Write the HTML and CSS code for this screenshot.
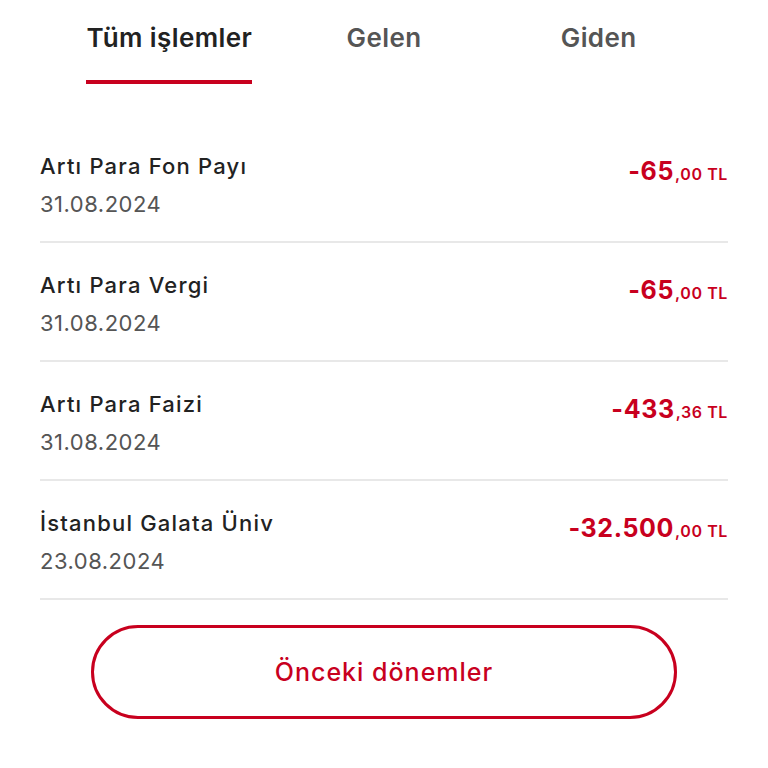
FILE: index.html
```html
<!DOCTYPE html>
<html lang="tr">
	<head>
		<meta charset="UTF-8" />
		<meta name="viewport" content="width=device-width, initial-scale=1.0" />
		<title>Hesap hareketleri</title>
		<link rel="stylesheet" href="styles.css">
	</head>
	<body>
		<div class="container">
			<div class="tabs">
				<div class="tab"><span class="tab-label active">Tüm işlemler</span></div>
				<div class="tab"><span class="tab-label">Gelen</span></div>
				<div class="tab"><span class="tab-label">Giden</span></div>
			</div>

			<div class="list">
				<div class="row">
					<div class="info">
						<p class="title">Artı Para Fon Payı</p>
						<p class="date">31.08.2024</p>
					</div>
					<p class="amount">-65<small>,00 TL</small></p>
				</div>
				<div class="row">
					<div class="info">
						<p class="title">Artı Para Vergi</p>
						<p class="date">31.08.2024</p>
					</div>
					<p class="amount">-65<small>,00 TL</small></p>
				</div>
				<div class="row">
					<div class="info">
						<p class="title">Artı Para Faizi</p>
						<p class="date">31.08.2024</p>
					</div>
					<p class="amount">-433<small>,36 TL</small></p>
				</div>
				<div class="row">
					<div class="info">
						<p class="title">İstanbul Galata Üniv</p>
						<p class="date">23.08.2024</p>
					</div>
					<p class="amount">-32.500<small>,00 TL</small></p>
				</div>
			</div>

			<button class="more">Önceki dönemler</button>
		</div>
	</body>
</html>
```

FILE: styles.css
```css
* {
	margin: 0;
	padding: 0;
	box-sizing: border-box;
}
body {
	font-family: Inter, "Noto Sans", sans-serif;
	background-color: #ffffff;
	color: #222222;
}
.container {
	padding: 0 40px;
}
.tabs {
	display: flex;
	margin: 0 22px;
}
.tab {
	flex: 1;
	display: flex;
	justify-content: center;
}
.tab-label {
	display: block;
	padding: 23px 0 27px;
	font-size: 26px;
	line-height: 30px;
	font-weight: 600;
	letter-spacing: 0.4px;
	color: #555555;
	border-bottom: 4px solid transparent;
}
.tab-label.active {
	color: #222222;
	border-bottom-color: #c8001e;
}
.list {
	margin-top: 40px;
}
.row {
	display: flex;
	justify-content: space-between;
	align-items: flex-start;
	height: 119px;
	padding-top: 28px;
	border-bottom: 2px solid #e8e8e8;
}
.title {
	font-size: 22px;
	line-height: 28px;
	font-weight: 500;
	letter-spacing: 1.2px;
}
.date {
	margin-top: 10px;
	font-size: 22px;
	line-height: 28px;
	letter-spacing: 0.5px;
	color: #555555;
}
.amount {
	padding-top: 4px;
	font-size: 25px;
	line-height: 30px;
	font-weight: 700;
	letter-spacing: 0.6px;
	color: #c8001e;
}
.amount small {
	margin-left: 1px;
	font-size: 16px;
	font-weight: 600;
	letter-spacing: 0.6px;
}
.more {
	display: block;
	width: calc(100% - 102px);
	height: 94px;
	margin: 25px auto 0;
	border: 3px solid #c8001e;
	border-radius: 47px;
	background: #ffffff;
	font-family: inherit;
	font-size: 25px;
	font-weight: 500;
	letter-spacing: 1px;
	color: #c8001e;
}
```
